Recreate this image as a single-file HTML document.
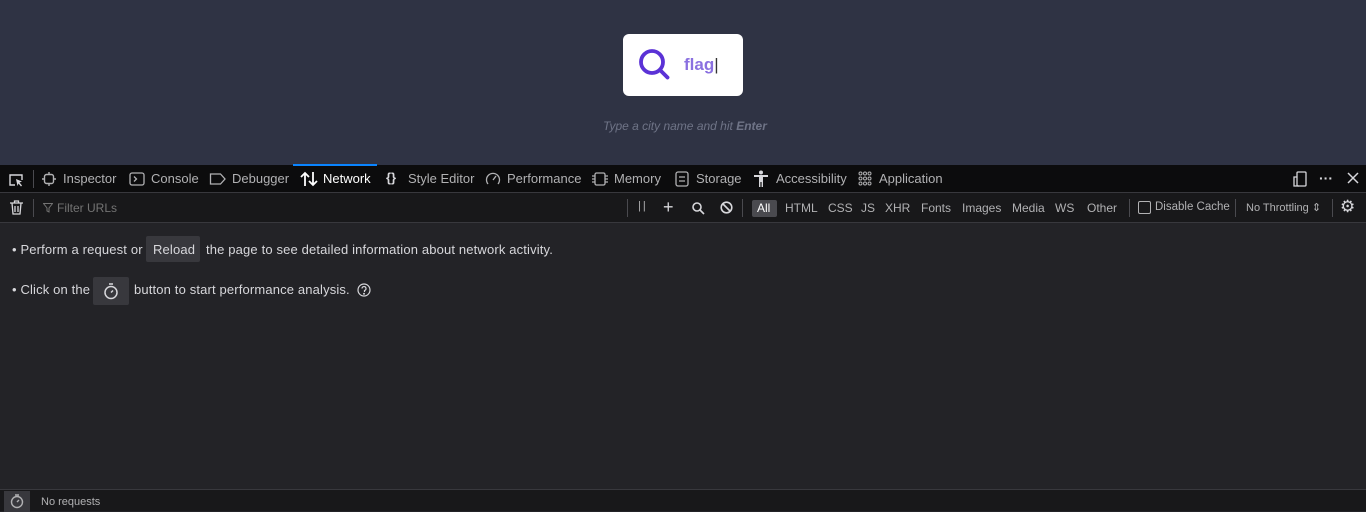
<!DOCTYPE html>
<html><head><meta charset="utf-8"><style>
*{margin:0;padding:0;box-sizing:border-box}
body{width:1366px;height:511px;overflow:hidden;background:#232327;font-family:"Liberation Sans",sans-serif;position:relative;color:#d7d7db}
.a{position:absolute;white-space:nowrap}
#top{position:absolute;left:0;top:0;width:1366px;height:165px;background:#2f3344}
#box{position:absolute;left:623px;top:34px;width:120px;height:62px;background:#fff;border-radius:6px}
#tabs{position:absolute;left:0;top:165px;width:1366px;height:28px;background:#0c0c0d;border-bottom:1px solid #38383d;font-size:13px;color:#b1b1b3}
#fb{position:absolute;left:0;top:193px;width:1366px;height:30px;background:#18181a;border-bottom:1px solid #38383d;font-size:12px;color:#b1b1b3}
.sep{position:absolute;width:1px;height:18px;background:#4a4a4f}
#bot{position:absolute;left:0;top:489px;width:1366px;height:22px;background:#18181a;border-top:1px solid #38383d;font-size:11px;color:#b1b1b3}
.btn{position:absolute;background:#38383d;border-radius:2px}
.m{font-size:13px;letter-spacing:0.15px}
</style></head><body>
<div id="top">
<div id="box">
<svg class="a" style="left:14px;top:13px" width="36" height="36" viewBox="0 0 36 36"><circle cx="15" cy="15" r="11" fill="none" stroke="#5b32d6" stroke-width="3.8"/><line x1="23" y1="23" x2="30.5" y2="30.5" stroke="#5b32d6" stroke-width="3.8" stroke-linecap="round"/></svg>
<div class="a" style="left:61px;top:21px;font-size:17px;color:#8a70e0;font-weight:bold">flag<span style="color:#333;font-weight:normal">|</span></div>
</div>
<div class="a" style="left:603px;top:119px;font-size:12px;font-style:italic;color:#6f7487">Type a city name and hit <b>Enter</b></div>
</div>
<div id="tabs">
<svg class="a" style="left:8px;top:7px" width="16" height="16" viewBox="0 0 16 16" fill="none" stroke="#d7d7db" stroke-width="1.4"><path d="M7 13H2V3h12v5"/><path d="M8 7l6 2.5-2.5 1 2.5 3-1 1-2.5-3-1 2.5z" fill="#d7d7db" stroke="none"/></svg>
<div class="sep" style="left:33px;top:5px"></div>
<svg class="a" style="left:42px;top:7px" width="14" height="14" viewBox="0 0 14 14" fill="none" stroke="#b1b1b3" stroke-width="1.4"><rect x="2.5" y="2.5" width="9" height="9" rx="2"/><path d="M7 0v2.5M7 11.5V14M0 7h2.5M11.5 7H14"/></svg>
<div class="a" style="left:63px;top:6px">Inspector</div>
<svg class="a" style="left:129px;top:7px" width="16" height="14" viewBox="0 0 16 14" fill="none" stroke="#b1b1b3" stroke-width="1.3"><rect x="1" y="1" width="14" height="12" rx="2"/><path d="M5 4.5l2.5 2.5L5 9.5"/></svg>
<div class="a" style="left:151px;top:6px">Console</div>
<svg class="a" style="left:209px;top:7px" width="18" height="14" viewBox="0 0 18 14" fill="none" stroke="#b1b1b3" stroke-width="1.3"><path d="M1.5 2h10l4.5 5-4.5 5h-10z"/></svg>
<div class="a" style="left:232px;top:6px">Debugger</div>
<div class="a" style="left:293px;top:-1px;width:84px;height:2px;background:#0a84ff"></div>
<svg class="a" style="left:300px;top:6px" width="18" height="16" viewBox="0 0 18 16" fill="none" stroke="#fff" stroke-width="1.8"><path d="M5 15V2M1 6l4-4 4 4M13 1v13M9 10l4 4 4-4"/></svg>
<div class="a" style="left:323px;top:6px;color:#fff">Network</div>
<div class="a" style="left:386px;top:5px;color:#d7d7db;font-weight:bold">{}</div>
<div class="a" style="left:408px;top:6px">Style Editor</div>
<svg class="a" style="left:485px;top:7px" width="16" height="14" viewBox="0 0 16 14" fill="none" stroke="#b1b1b3" stroke-width="1.3"><path d="M3 12A6.5 6.5 0 1 1 13 12"/><path d="M8 8l3-4"/></svg>
<div class="a" style="left:507px;top:6px">Performance</div>
<svg class="a" style="left:592px;top:7px" width="16" height="14" viewBox="0 0 16 14" fill="none" stroke="#b1b1b3" stroke-width="1.3"><rect x="3" y="1" width="10" height="12" rx="1.5"/><path d="M0 4h3M0 7h3M0 10h3M13 4h3M13 7h3M13 10h3"/></svg>
<div class="a" style="left:614px;top:6px">Memory</div>
<svg class="a" style="left:675px;top:6px" width="14" height="16" viewBox="0 0 14 16" fill="none" stroke="#b1b1b3" stroke-width="1.3"><rect x="1" y="1" width="12" height="14" rx="2"/><path d="M4 6h6M4 10h6"/></svg>
<div class="a" style="left:696px;top:6px">Storage</div>
<svg class="a" style="left:754px;top:5px" width="14" height="18" viewBox="0 0 14 18" fill="#d7d7db"><circle cx="7" cy="2.5" r="2"/><path d="M0 5h14v2H9v10H7.6v-5h-1.2v5H5V7H0z"/></svg>
<div class="a" style="left:776px;top:6px">Accessibility</div>
<svg class="a" style="left:858px;top:6px" width="14" height="15" viewBox="0 0 14 15" fill="none" stroke="#b1b1b3" stroke-width="1"><circle cx="2.5" cy="2.5" r="1.5"/><circle cx="7" cy="2.5" r="1.5"/><circle cx="11.5" cy="2.5" r="1.5"/><circle cx="2.5" cy="7.5" r="1.5"/><circle cx="7" cy="7.5" r="1.5"/><circle cx="11.5" cy="7.5" r="1.5"/><circle cx="2.5" cy="12.5" r="1.5"/><circle cx="7" cy="12.5" r="1.5"/><circle cx="11.5" cy="12.5" r="1.5"/></svg>
<div class="a" style="left:879px;top:6px">Application</div>
<svg class="a" style="left:1292px;top:6px" width="16" height="16" viewBox="0 0 16 16" fill="none" stroke="#d7d7db" stroke-width="1.3"><rect x="5" y="1" width="9" height="14" rx="1"/><path d="M5 6H2v9h5"/></svg>
<div class="a" style="left:1319px;top:5px;color:#d7d7db;font-size:14px;font-weight:bold">···</div>
<svg class="a" style="left:1347px;top:7px" width="12" height="12" viewBox="0 0 12 12" stroke="#d7d7db" stroke-width="1.5"><path d="M1 1l10 10M11 1L1 11"/></svg>
</div>
<div id="fb">
<svg class="a" style="left:10px;top:7px" width="13" height="15" viewBox="0 0 13 15" fill="none" stroke="#d7d7db" stroke-width="1.3"><path d="M0 3h13M4.5 3V1h4v2M2 3l1 11h7l1-11M5 6v6M8 6v6"/></svg>
<div class="sep" style="left:33px;top:6px"></div>
<svg class="a" style="left:43px;top:10px" width="10" height="10" viewBox="0 0 10 10" fill="none" stroke="#737373" stroke-width="1"><path d="M0.5 0.5h9L6 5v4L4 8V5z"/></svg>
<div class="a" style="left:57px;top:8px;color:#737373">Filter URLs</div>
<div class="sep" style="left:627px;top:6px"></div>
<div class="a" style="left:638px;top:7px;font-size:11px;letter-spacing:2px">||</div>
<div class="a" style="left:663px;top:4px;font-size:18px;color:#d7d7db">+</div>
<svg class="a" style="left:692px;top:9px" width="13" height="13" viewBox="0 0 13 13" fill="none" stroke="#d7d7db" stroke-width="1.6"><circle cx="5" cy="5" r="4"/><path d="M8 8l4 4"/></svg>
<svg class="a" style="left:720px;top:8px" width="13" height="13" viewBox="0 0 13 13" fill="none" stroke="#d7d7db" stroke-width="1.6"><circle cx="6.5" cy="6.5" r="5.3"/><path d="M3 3l7 7"/></svg>
<div class="sep" style="left:742px;top:6px"></div>
<div class="a" style="left:752px;top:7px;width:25px;height:17px;background:#4a4a4f;border-radius:2px"></div>
<div class="a" style="left:757px;top:8px;color:#fff">All</div>
<div class="a" style="left:785px;top:8px">HTML</div>
<div class="a" style="left:828px;top:8px">CSS</div>
<div class="a" style="left:861px;top:8px">JS</div>
<div class="a" style="left:885px;top:8px">XHR</div>
<div class="a" style="left:921px;top:8px">Fonts</div>
<div class="a" style="left:962px;top:8px">Images</div>
<div class="a" style="left:1012px;top:8px">Media</div>
<div class="a" style="left:1055px;top:8px">WS</div>
<div class="a" style="left:1087px;top:8px">Other</div>
<div class="sep" style="left:1129px;top:6px"></div>
<div class="a" style="left:1138px;top:8px;width:13px;height:13px;border:1px solid #b1b1b3;border-radius:2px"></div>
<div class="a" style="left:1155px;top:8px;font-size:11.5px">Disable Cache</div>
<div class="sep" style="left:1235px;top:6px"></div>
<div class="a" style="left:1246px;top:8px;font-size:11px">No Throttling ⇕</div>
<div class="sep" style="left:1332px;top:6px"></div>
<div class="a" style="left:1340px;top:4px;font-size:17px;color:#d7d7db">⚙</div>
</div>
<div class="a m" style="left:12px;top:242px">• Perform a request or</div>
<div class="btn" style="left:146px;top:236px;width:54px;height:26px"></div>
<div class="a m" style="left:153px;top:242px">Reload</div>
<div class="a m" style="left:206px;top:242px">the page to see detailed information about network activity.</div>
<div class="a m" style="left:12px;top:282px">• Click on the</div>
<div class="btn" style="left:93px;top:277px;width:36px;height:28px"></div>
<svg class="a" style="left:103px;top:282px" width="16" height="18" viewBox="0 0 16 18" fill="none" stroke="#d7d7db" stroke-width="1.5"><circle cx="8" cy="10.5" r="6"/><path d="M6 2h4M8 10.5l2-2"/></svg>
<div class="a m" style="left:134px;top:282px">button to start performance analysis.</div>
<svg class="a" style="left:357px;top:283px" width="14" height="14" viewBox="0 0 14 14" fill="none" stroke="#d7d7db" stroke-width="1.2"><circle cx="7" cy="7" r="6"/><path d="M5 5.5a2 2 0 1 1 2.5 2V9"/><circle cx="7" cy="10.8" r=".4"/></svg>
<div id="bot">
<div class="a" style="left:4px;top:1px;width:26px;height:21px;background:#38383d"></div>
<svg class="a" style="left:9px;top:3px" width="16" height="16" viewBox="0 0 16 16" fill="none" stroke="#b1b1b3" stroke-width="1.4"><circle cx="8" cy="9" r="5.5"/><path d="M6 2h4M8 9l2-2"/></svg>
<div class="a" style="left:41px;top:6px">No requests</div>
</div>
</body></html>
